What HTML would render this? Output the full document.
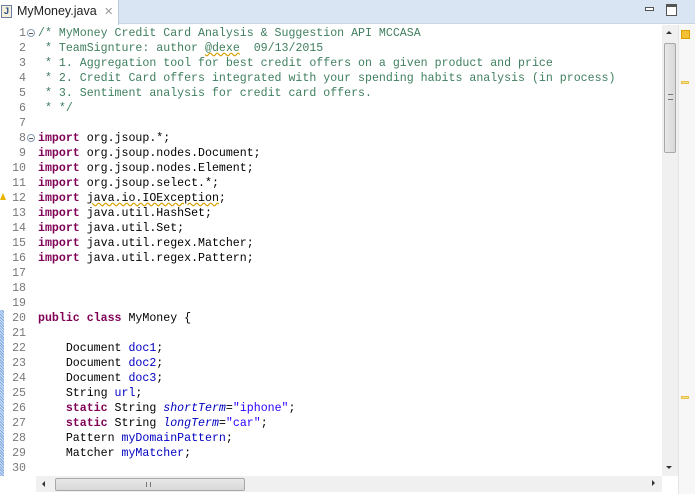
<!DOCTYPE html>
<html><head><meta charset="utf-8"><style>
*{margin:0;padding:0;box-sizing:border-box}
body{width:695px;height:494px;overflow:hidden;background:#fff;position:relative;font-family:"Liberation Mono",monospace}
.tabbar{position:absolute;left:0;top:0;width:695px;height:24px;background:#dae5f3;border-bottom:1px solid #c9d6e6}
.tab{position:absolute;left:0;top:0;width:119px;height:25px;background:#fff;border-right:1px solid #b9c8dc;font-family:"Liberation Sans",sans-serif;font-size:12.5px;color:#222;padding:4px 0 0 17px}
.code{position:absolute;left:0;top:25px;width:662px;height:451px;overflow:hidden}
.ln{position:absolute;left:0;width:26px;text-align:right;font-size:11.6px;color:#787878;line-height:15px;white-space:pre}
.tx{position:absolute;left:38px;font-size:11.6px;color:#000;line-height:15px;white-space:pre}
.c{color:#3f7f5f}.k{color:#7f0055;font-weight:bold}.f{color:#0000c0}.s{color:#2a00ff}.i{font-style:italic}
.vs{position:absolute;left:662px;top:25px;width:16px;height:451px;background:#f0f0f0}
.thumb{position:absolute;left:664px;top:43px;width:12px;height:110px;background:linear-gradient(90deg,#e8e8e8,#d8d8d8);border:1px solid #a8a8a8;border-radius:2px}
.ruler{position:absolute;left:678px;top:25px;width:17px;height:469px;background:#f7f7f7;border-left:1px solid #e4e4e4}
.hs{position:absolute;left:36px;top:476px;width:626px;height:16px;background:#f0f0f0}
.hthumb{position:absolute;left:55px;top:478px;width:190px;height:13px;background:linear-gradient(#e8e8e8,#d8d8d8);border:1px solid #a8a8a8;border-radius:2px}
.fold{position:absolute;left:27px;width:8px;height:8px;border:1px solid #8a9ab0;border-radius:50%;background:#fff}
.fold:after{content:"";position:absolute;left:1px;top:3px;width:4px;height:1px;background:#555}
</style></head><body>
<div class="tabbar"></div>
<div class="tab"><span style="position:absolute;left:1px;top:5px;width:11px;height:13px;border:1px solid #6b7fa8;background:#f4f0d8;font-size:9px;font-weight:bold;color:#2b4b8c;text-align:center;line-height:11px">J</span>MyMoney.java <span style="color:#999;font-size:11px;margin-left:4px">✕</span></div>
<div style="position:absolute;left:645px;top:7px;width:9px;height:4px;border:1px solid #555;background:#fff"></div>
<div style="position:absolute;left:666px;top:4px;width:11px;height:12px;border:1px solid #555;border-top-width:3px;background:#fff"></div>

<div class="code">
<div style="position:absolute;left:0;top:285px;width:4px;height:166px;background:repeating-linear-gradient(45deg,#7fa9e0 0 1px,#cfe0f6 1px 2px)"></div>
<div class="fold" style="top:4px"></div>
<div class="fold" style="top:109px"></div>
<div style="position:absolute;left:0;top:168px;width:0;height:0;border-left:3px solid transparent;border-right:3px solid transparent;border-bottom:7px solid #e8b400"></div>
<div class="ln" style="top:1px">1
2
3
4
5
6
7
8
9
10
11
12
13
14
15
16
17
18
19
20
21
22
23
24
25
26
27
28
29
30</div>
<div class="tx" style="top:1px"><span class="c">/* MyMoney Credit Card Analysis &amp; Suggestion API MCCASA
 * TeamSignture: author <span style="text-decoration:underline wavy #d8a000">@dexe</span>  09/13/2015
 * 1. Aggregation tool for best credit offers on a given product and price
 * 2. Credit Card offers integrated with your spending habits analysis (in process)
 * 3. Sentiment analysis for credit card offers.
 * */</span>

<span class="k">import</span> org.jsoup.*;
<span class="k">import</span> org.jsoup.nodes.Document;
<span class="k">import</span> org.jsoup.nodes.Element;
<span class="k">import</span> org.jsoup.select.*;
<span class="k">import</span> <span style="text-decoration:underline wavy #d8a000">java.io.IOException</span>;
<span class="k">import</span> java.util.HashSet;
<span class="k">import</span> java.util.Set;
<span class="k">import</span> java.util.regex.Matcher;
<span class="k">import</span> java.util.regex.Pattern;



<span class="k">public</span> <span class="k">class</span> MyMoney {

    Document <span class="f">doc1</span>;
    Document <span class="f">doc2</span>;
    Document <span class="f">doc3</span>;
    String <span class="f">url</span>;
    <span class="k">static</span> String <span class="f i">shortTerm</span>=<span class="s">"iphone"</span>;
    <span class="k">static</span> String <span class="f i">longTerm</span>=<span class="s">"car"</span>;
    Pattern <span class="f">myDomainPattern</span>;
    Matcher <span class="f">myMatcher</span>;
</div>
</div>

<div class="vs"></div>
<div style="position:absolute;left:666px;top:31px;border-left:3px solid transparent;border-right:3px solid transparent;border-bottom:3px solid #333"></div>
<div class="thumb"><div style="position:absolute;left:3px;top:50px;width:5px;height:6px;border-top:1px solid #777;border-bottom:1px solid #777"></div></div>
<div style="position:absolute;left:666px;top:466px;border-left:3px solid transparent;border-right:3px solid transparent;border-top:3px solid #333"></div>
<div class="ruler"></div>
<div style="position:absolute;left:681px;top:30px;width:9px;height:9px;background:#f2c033;border:1px solid #d8a000"></div>
<div style="position:absolute;left:681px;top:81px;width:8px;height:3px;background:#f7e08a;border:1px solid #e6c04a"></div>
<div style="position:absolute;left:681px;top:396px;width:8px;height:3px;background:#f7e08a;border:1px solid #e6c04a"></div>
<div class="hs"></div>
<div style="position:absolute;left:42px;top:481px;border-top:3px solid transparent;border-bottom:3px solid transparent;border-right:3px solid #333"></div>
<div class="hthumb"><div style="position:absolute;left:90px;top:3px;width:5px;height:5px;border-left:1px solid #777;border-right:1px solid #777"></div></div>
<div style="position:absolute;left:652px;top:480px;border-top:3px solid transparent;border-bottom:3px solid transparent;border-left:3px solid #333"></div>
</body></html>
